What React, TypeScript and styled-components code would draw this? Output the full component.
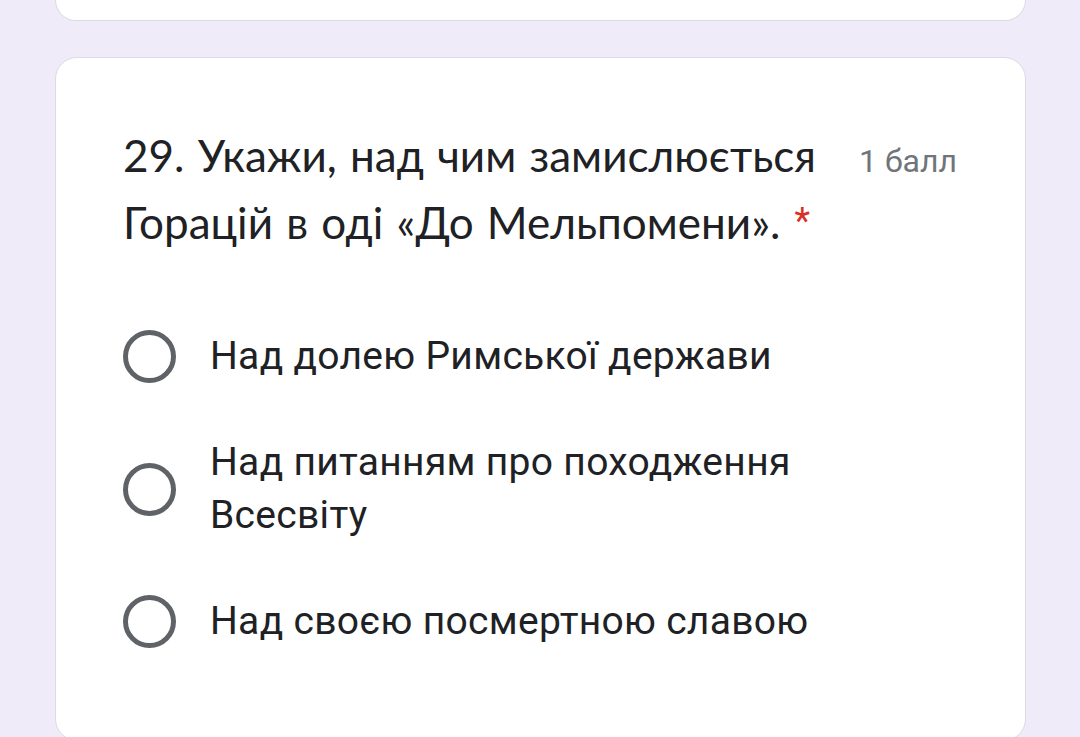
import React from 'react';
import styled, { createGlobalStyle } from 'styled-components';

const GlobalStyle = createGlobalStyle`
  html, body {
    margin: 0;
    padding: 0;
    background: #f0ebf8;
  }
  body {
    font-family: Roboto, "Liberation Sans", sans-serif;
    overflow: hidden;
  }
`;

const Page = styled.div`
  display: flex;
  flex-direction: column;
  gap: 36px;
  padding: 0 54px 0 55px;
`;

const CardTail = styled.div`
  flex: none;
  height: 21px;
  background: #fff;
  border: 1.5px solid #dadce0;
  border-top: none;
  border-radius: 0 0 22px 22px;
  box-sizing: border-box;
`;

const Card = styled.div`
  background: #fff;
  border: 1.5px solid #dadce0;
  border-radius: 22px;
  padding: 64px 68px 92px 67px;
  box-sizing: border-box;
`;

const Header = styled.div`
  display: flex;
  align-items: baseline;
  gap: 24px;
`;

const Title = styled.div`
  flex: 1;
  font-family: Lato, sans-serif;
  font-size: 44px;
  letter-spacing: 0;
  word-spacing: 2px;
  line-height: 66px;
  color: #202124;
`;

const Required = styled.span`
  color: #d93025;
  margin-left: 14px;
  font-family: Roboto, sans-serif;
  font-size: 36px;
  vertical-align: 6px;
`;

const Points = styled.div`
  font-size: 32px;
  color: #70757a;
  white-space: nowrap;
`;

const Options = styled.div`
  display: flex;
  flex-direction: column;
  gap: 53px;
  margin-top: 75px;
`;

const Option = styled.label`
  display: flex;
  align-items: center;
  gap: 34px;
`;

const Radio = styled.span`
  flex: none;
  width: 53px;
  height: 53px;
  border: 5px solid #5f6368;
  border-radius: 50%;
  box-sizing: border-box;
`;

const OptionText = styled.span`
  font-size: 39px;
  line-height: 53px;
  color: #202124;
  letter-spacing: 0.3px;
  max-width: 600px;
`;

const options = [
  'Над долею Римської держави',
  'Над питанням про походження Всесвіту',
  'Над своєю посмертною славою',
];

export default function App() {
  return (
    <>
      <GlobalStyle />
      <Page>
        <CardTail />
        <Card>
          <Header>
            <Title>
              29. Укажи, над чим замислюється Горацій в оді «До Мельпомени».
              <Required>*</Required>
            </Title>
            <Points>1 балл</Points>
          </Header>
          <Options>
            {options.map(text => (
              <Option key={text}>
                <Radio />
                <OptionText>{text}</OptionText>
              </Option>
            ))}
          </Options>
        </Card>
      </Page>
    </>
  );
}
